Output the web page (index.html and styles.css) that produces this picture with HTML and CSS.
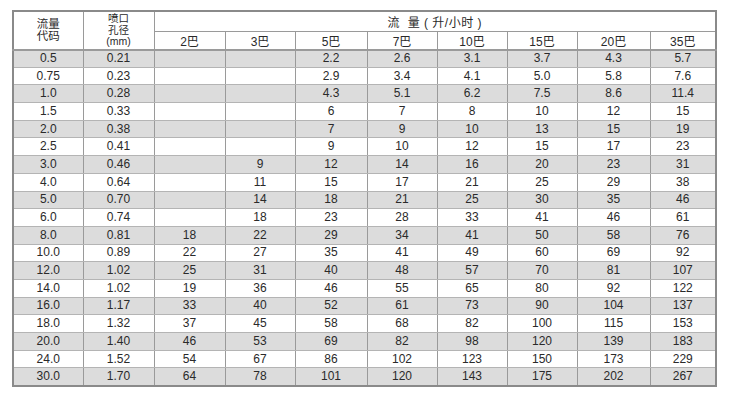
FILE: index.html
```html
<!DOCTYPE html>
<html lang="zh">
<head>
<meta charset="utf-8">
<link rel="stylesheet" href="styles.css">
</head>
<body>
<div class="wrap">
<table class="flow">
<colgroup>
<col class="c1"><col class="c2"><col class="c3"><col class="c4"><col class="c5"><col class="c6"><col class="c7"><col class="c8"><col class="c9"><col class="c10">
</colgroup>
<thead>
<tr class="h1">
<th rowspan="2" class="hcode">流量<br>代码</th>
<th rowspan="2" class="hnoz">喷口<br>孔径<br>(mm)</th>
<th colspan="8" class="htitle">流&nbsp;&nbsp;量&nbsp;(&nbsp;升/小时&nbsp;)</th>
</tr>
<tr class="h2">
<th>2巴</th><th>3巴</th><th>5巴</th><th>7巴</th><th>10巴</th><th>15巴</th><th>20巴</th><th>35巴</th>
</tr>
</thead>
<tbody>
<tr><td>0.5</td><td>0.21</td><td></td><td></td><td>2.2</td><td>2.6</td><td>3.1</td><td>3.7</td><td>4.3</td><td>5.7</td></tr>
<tr><td>0.75</td><td>0.23</td><td></td><td></td><td>2.9</td><td>3.4</td><td>4.1</td><td>5.0</td><td>5.8</td><td>7.6</td></tr>
<tr><td>1.0</td><td>0.28</td><td></td><td></td><td>4.3</td><td>5.1</td><td>6.2</td><td>7.5</td><td>8.6</td><td>11.4</td></tr>
<tr><td>1.5</td><td>0.33</td><td></td><td></td><td>6</td><td>7</td><td>8</td><td>10</td><td>12</td><td>15</td></tr>
<tr><td>2.0</td><td>0.38</td><td></td><td></td><td>7</td><td>9</td><td>10</td><td>13</td><td>15</td><td>19</td></tr>
<tr><td>2.5</td><td>0.41</td><td></td><td></td><td>9</td><td>10</td><td>12</td><td>15</td><td>17</td><td>23</td></tr>
<tr><td>3.0</td><td>0.46</td><td></td><td>9</td><td>12</td><td>14</td><td>16</td><td>20</td><td>23</td><td>31</td></tr>
<tr><td>4.0</td><td>0.64</td><td></td><td>11</td><td>15</td><td>17</td><td>21</td><td>25</td><td>29</td><td>38</td></tr>
<tr><td>5.0</td><td>0.70</td><td></td><td>14</td><td>18</td><td>21</td><td>25</td><td>30</td><td>35</td><td>46</td></tr>
<tr><td>6.0</td><td>0.74</td><td></td><td>18</td><td>23</td><td>28</td><td>33</td><td>41</td><td>46</td><td>61</td></tr>
<tr><td>8.0</td><td>0.81</td><td>18</td><td>22</td><td>29</td><td>34</td><td>41</td><td>50</td><td>58</td><td>76</td></tr>
<tr><td>10.0</td><td>0.89</td><td>22</td><td>27</td><td>35</td><td>41</td><td>49</td><td>60</td><td>69</td><td>92</td></tr>
<tr><td>12.0</td><td>1.02</td><td>25</td><td>31</td><td>40</td><td>48</td><td>57</td><td>70</td><td>81</td><td>107</td></tr>
<tr><td>14.0</td><td>1.02</td><td>19</td><td>36</td><td>46</td><td>55</td><td>65</td><td>80</td><td>92</td><td>122</td></tr>
<tr><td>16.0</td><td>1.17</td><td>33</td><td>40</td><td>52</td><td>61</td><td>73</td><td>90</td><td>104</td><td>137</td></tr>
<tr><td>18.0</td><td>1.32</td><td>37</td><td>45</td><td>58</td><td>68</td><td>82</td><td>100</td><td>115</td><td>153</td></tr>
<tr><td>20.0</td><td>1.40</td><td>46</td><td>53</td><td>69</td><td>82</td><td>98</td><td>120</td><td>139</td><td>183</td></tr>
<tr><td>24.0</td><td>1.52</td><td>54</td><td>67</td><td>86</td><td>102</td><td>123</td><td>150</td><td>173</td><td>229</td></tr>
<tr><td>30.0</td><td>1.70</td><td>64</td><td>78</td><td>101</td><td>120</td><td>143</td><td>175</td><td>202</td><td>267</td></tr>
</tbody>
</table>
</div>
</body>
</html>
```

FILE: styles.css
```css
html, body {
  margin: 0;
  padding: 0;
  background: #ffffff;
}
.wrap {
  padding: 10px 0 0 12px;
}
.flow {
  border-collapse: collapse;
  table-layout: fixed;
  width: 704px;
  border: 2px solid #8a8a8a;
  font-family: "Liberation Sans", Arial, "Noto Sans CJK SC", sans-serif;
  font-size: 12px;
  color: #2a2a2a;
}
.c1 { width: 70px; }
.c2 { width: 71px; }
.c3 { width: 71px; }
.c4 { width: 70px; }
.c5 { width: 72px; }
.c6 { width: 70px; }
.c7 { width: 70px; }
.c8 { width: 70px; }
.c9 { width: 73px; }
.c10 { width: 66px; }
.flow th, .flow td {
  padding: 0;
  text-align: center;
  border-left: 1px solid #9a9a9a;
  border-right: 1px solid #9a9a9a;
  font-weight: normal;
  overflow: hidden;
  white-space: nowrap;
}
.hcode {
  font-size: 11.5px;
  line-height: 12px;
  padding-top: 1px;
  border-bottom: 2px solid #9a9a9a;
}
.hnoz {
  font-size: 10.5px;
  line-height: 11.5px;
  border-bottom: 2px solid #9a9a9a;
}
.h1 {
  height: 20px;
}
.htitle {
  font-size: 12px;
  letter-spacing: 0.5px;
  padding-top: 2px;
  border-bottom: 1px solid #9a9a9a;
}
.h2 {
  height: 17px;
}
.h2 th {
  font-size: 12px;
  border-bottom: 2px solid #9a9a9a;
}
.flow tbody tr {
  height: 17.7px;
}
.flow tbody td {
  border-bottom: 1px solid #b4b4b4;
  line-height: 13px;
}
.flow tbody tr:nth-child(odd) td {
  background: #dcdcdc;
}
```
